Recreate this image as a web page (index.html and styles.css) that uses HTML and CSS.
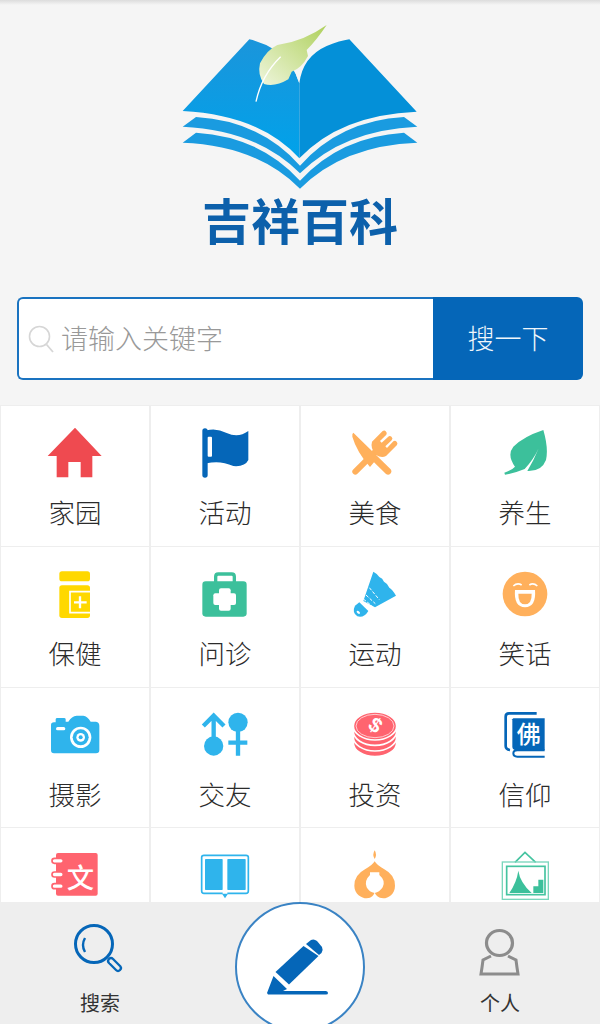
FILE: index.html
```html
<!DOCTYPE html>
<html lang="zh-CN">
<head>
<meta charset="utf-8">
<title>吉祥百科</title>
<link rel="stylesheet" href="styles.css">
</head>
<body>
<header class="brand">
  <svg class="logo" viewBox="0 60 840 510" aria-hidden="true">
    <defs>
      <linearGradient id="feather" x1="1" y1="0" x2="0" y2="1">
        <stop offset="0" stop-color="#aed05c"/>
        <stop offset="0.5" stop-color="#cfe39c"/>
        <stop offset="1" stop-color="#eef5dc"/>
      </linearGradient>
      <linearGradient id="pageL" x1="0" y1="0" x2="0" y2="1">
        <stop offset="0" stop-color="#1b95db"/>
        <stop offset="1" stop-color="#00a2ea"/>
      </linearGradient>
    </defs>
    <path fill="url(#pageL)" d="M68 333 L268 118 Q310 128 345 150 Q400 190 418 250 V475 Q300 345 68 333Z"/>
    <path fill="#0490d8" d="M418 250 Q428 170 500 138 Q540 122 568 118 L770 335 Q540 345 418 475Z"/>
    <path fill="#1a9be0" d="M68 380 L108 351 Q300 362 420 497 V520 Q290 390 68 380Z"/>
    <path fill="#1a9be0" d="M772 380 L732 351 Q540 362 420 497 V520 Q550 390 772 380Z"/>
    <path fill="#1a9be0" d="M68 428 L108 398 Q300 410 420 542 V566 Q290 436 68 428Z"/>
    <path fill="#1a9be0" d="M772 428 L732 398 Q540 410 420 542 V566 Q550 436 772 428Z"/>
    <path fill="url(#feather)" d="M500 75 Q470 120 440 150 L444 168 Q425 205 395 215 L385 238 Q345 262 312 252 Q292 225 300 190 Q320 150 352 135 Q430 125 500 75Z"/>
    <path fill="#f5f5f5" d="M405 215 Q415 222 418 250 Q412 235 405 215Z"/>
    <path fill="none" stroke="#ffffff" stroke-width="4" d="M288 305 Q305 225 362 170"/>
  </svg>
  <div class="brand-name">吉祥百科</div>
</header>

<div class="search">
  <div class="search-field">
    <svg class="search-glass" viewBox="0 0 26 28" aria-hidden="true">
      <circle cx="11.5" cy="11.5" r="10" fill="none" stroke="#d6d6d6" stroke-width="1.6"/>
      <path d="M18.5 19.5 L25 27" stroke="#d6d6d6" stroke-width="1.8" fill="none"/>
    </svg>
    <span class="placeholder">请输入关键字</span>
  </div>
  <div class="search-btn">搜一下</div>
</div>

<main class="content">
  <div class="grid">
    <a class="cell">
      <svg class="icon" viewBox="135 63 180 162"><path fill="#ef4a50" d="M225 68 L305 153 H277 V217 H242 V171 H205 V217 H170 V153 H143Z"/></svg>
      <span class="label">家园</span>
    </a>
    <a class="cell">
      <svg class="icon" viewBox="585 63 180 162">
        <path fill="#0566b8" d="M620 76 Q650 68 680 84 Q715 100 745 78 V165 Q735 186 700 183 Q660 165 620 175Z"/>
        <rect x="607" y="70" width="16" height="148" rx="8" fill="#0566b8"/>
        <rect x="623" y="95" width="13" height="60" rx="3" fill="#fff"/>
      </svg>
      <span class="label">活动</span>
    </a>
    <a class="cell">
      <svg class="icon" viewBox="135 63 180 162">
        <path fill="#ffb05c" d="M160 83 L272 193 A10 10 0 0 1 258 207 L222 172 L210 186 Q170 140 157 95 Q156 85 160 83Z"/>
        <path fill="none" stroke="#ffb05c" stroke-width="18" stroke-linecap="round" d="M166 200 L236 130"/>
        <path fill="#ffb05c" d="M216 110 L248 78 A8 8 0 0 1 259 89 L240 108 L245 113 L264 96 A7 7 0 0 1 275 106 L256 124 L261 129 L280 109 A8 8 0 0 1 291 120 L258 153 Q245 160 228 150 Q210 130 216 110Z"/>
      </svg>
      <span class="label">美食</span>
    </a>
    <a class="cell">
      <svg class="icon" viewBox="585 63 180 162"><path fill="#3cc09b" d="M730 75 Q746 130 738 165 Q725 200 682 198 Q702 165 716 130 Q700 165 674 192 Q640 206 615 209 L613 203 Q635 196 645 185 Q620 150 640 125 Q670 95 730 75Z"/></svg>
      <span class="label">养生</span>
    </a>

    <a class="cell">
      <svg class="icon" viewBox="135 486 180 162">
        <rect x="178" y="499" width="92" height="30" rx="8" fill="#ffd800"/>
        <rect x="178" y="541" width="92" height="98" rx="8" fill="#ffd800"/>
        <path fill="none" stroke="#fff" stroke-width="5" d="M270 560 H210 V623 H270"/>
        <path fill="none" stroke="#fff" stroke-width="7" d="M240 574 V610 M222 592 H260"/>
      </svg>
      <span class="label">保健</span>
    </a>
    <a class="cell">
      <svg class="icon" viewBox="585 486 180 162">
        <rect x="607" y="529" width="133" height="106" rx="10" fill="#3cc09b"/>
        <path fill="none" stroke="#3cc09b" stroke-width="10" d="M647 535 V515 Q647 507 655 507 H695 Q703 507 703 515 V535"/>
        <rect x="657" y="550" width="35" height="67" rx="6" fill="#fff"/>
        <rect x="640" y="565" width="68" height="35" rx="6" fill="#fff"/>
      </svg>
      <span class="label">问诊</span>
    </a>
    <a class="cell">
      <svg class="icon" viewBox="135 486 180 162">
        <path fill="#2fb4ec" d="M220 500 Q232 506 238 516 Q248 520 252 530 Q264 536 268 548 Q278 554 288 572 L225 607 L190 588Z"/>
        <path fill="#2fb4ec" d="M178 592 L205 618 Q192 640 172 634 Q155 622 165 602Z"/>
        <path fill="none" stroke="#fff" stroke-width="3" stroke-dasharray="10 5" d="M190 582 L215 602 M198 570 L226 596 M208 548 L238 584"/>
        <ellipse cx="175" cy="622" rx="6" ry="3.5" fill="#fff" transform="rotate(40 175 622)"/>
      </svg>
      <span class="label">运动</span>
    </a>
    <a class="cell">
      <svg class="icon" viewBox="585 486 180 162">
        <circle cx="675" cy="567" r="67" fill="#ffb05c"/>
        <path fill="none" stroke="#fff" stroke-width="5" d="M640 543 Q652 532 665 540 M688 540 Q700 532 712 543"/>
        <path fill="#fff" d="M645 555 H705 Q709 606 675 607 Q641 606 645 555Z"/>
        <path fill="#ffb05c" d="M655 566 H695 Q696 597 675 598 Q654 597 655 566Z"/>
      </svg>
      <span class="label">笑话</span>
    </a>

    <a class="cell">
      <svg class="icon" viewBox="135 54 180 162">
        <path fill="#2fb4ec" d="M153 105 Q153 97 162 97 H167 V88 Q167 84 172 84 H192 Q197 84 197 88 V95 H205 Q215 78 230 77 H250 Q262 78 272 95 H288 Q298 97 298 107 V180 Q298 190 288 190 H162 Q153 190 153 180Z"/>
        <rect x="168" y="111" width="28" height="10" rx="5" fill="#fff"/>
        <circle cx="242" cy="142" r="32" fill="#fff"/>
        <circle cx="242" cy="142" r="24" fill="#2fb4ec"/>
        <circle cx="242" cy="142" r="13" fill="#fff"/>
        <circle cx="242" cy="142" r="6" fill="#2fb4ec"/>
      </svg>
      <span class="label">摄影</span>
    </a>
    <a class="cell">
      <svg class="icon" viewBox="585 54 180 162">
        <circle cx="641" cy="168" r="29" fill="#2fb4ec"/>
        <path fill="none" stroke="#2fb4ec" stroke-width="13" d="M641 150 V80 M610 108 L641 77 L672 108"/>
        <circle cx="714" cy="97" r="29" fill="#2fb4ec"/>
        <path fill="none" stroke="#2fb4ec" stroke-width="13" d="M714 115 V197 M685 158 H742"/>
      </svg>
      <span class="label">交友</span>
    </a>
    <a class="cell">
      <svg class="icon" viewBox="135 54 180 162">
        <g fill="#ff646f" stroke="#fff" stroke-width="5">
          <ellipse cx="225" cy="158" rx="65" ry="42"/>
          <ellipse cx="225" cy="141" rx="65" ry="42"/>
          <ellipse cx="225" cy="124" rx="65" ry="42"/>
          <ellipse cx="225" cy="108" rx="65" ry="42"/>
        </g>
        <ellipse cx="225" cy="108" rx="57" ry="35" fill="none" stroke="#fff" stroke-width="2"/>
        <text class="coin-text" x="225" y="126" transform="rotate(35 225 108)">$</text>
      </svg>
      <span class="label">投资</span>
    </a>
    <a class="cell">
      <svg class="icon" viewBox="585 54 180 162">
        <path fill="none" stroke="#0566b8" stroke-width="8" d="M710 70 H627 Q617 70 617 80 V168 Q617 178 630 180"/>
        <path fill="#0566b8" d="M640 85 H734 V180 H650 Q637 180 637 170 V88Z"/>
        <path fill="none" stroke="#0566b8" stroke-width="6" d="M734 200 H652 Q640 200 640 190 Q640 181 652 181 H734"/>
        <text class="book-text" x="686" y="160">佛</text>
      </svg>
      <span class="label">信仰</span>
    </a>

    <a class="cell">
      <svg class="icon" viewBox="135 477 180 162">
        <rect x="168" y="492" width="125" height="128" rx="6" fill="#ff646f"/>
        <g fill="#fff" stroke="#ff646f" stroke-width="5">
          <rect x="156" y="508" width="34" height="15" rx="7.5"/>
          <rect x="156" y="549" width="34" height="15" rx="7.5"/>
          <rect x="156" y="584" width="34" height="15" rx="7.5"/>
        </g>
        <text class="note-text" x="241" y="598">文</text>
      </svg>
    </a>
    <a class="cell">
      <svg class="icon" viewBox="585 477 180 162">
        <path fill="none" stroke="#2fb4ec" stroke-width="5" d="M668 613 H612 Q605 613 605 606 V505 Q605 499 612 499 H738 Q745 499 745 505 V606 Q745 613 738 613 H682"/>
        <path fill="#2fb4ec" d="M666 614 H684 L675 628Z"/>
        <rect x="615" y="510" width="53" height="93" rx="2" fill="#2fb4ec"/>
        <rect x="682" y="510" width="55" height="93" rx="2" fill="#2fb4ec"/>
      </svg>
    </a>
    <a class="cell">
      <svg class="icon" viewBox="135 477 180 162">
        <path fill="#ffb05c" d="M224 484 Q232 497 224 510 Q216 497 224 484Z"/>
        <path fill="#ffb05c" d="M224 517 Q216 530 195 541 Q163 558 163 590 C163 615 185 628 200 628 C215 628 222 618 224 610 C226 618 235 628 250 628 C265 628 285 615 285 590 Q285 558 253 541 Q232 530 224 517Z"/>
        <path fill="#fff" d="M210 550 H238 V558 Q258 575 248 595 Q238 610 224 612 Q208 610 200 595 Q192 575 210 558Z"/>
      </svg>
    </a>
    <a class="cell">
      <svg class="icon" viewBox="585 477 180 162">
        <path fill="none" stroke="#45c4a0" stroke-width="5" d="M645 520 L675 490 L707 520"/>
        <rect x="607" y="519" width="138" height="112" fill="none" stroke="#7ad6bc" stroke-width="4"/>
        <rect x="620" y="532" width="115" height="85" fill="none" stroke="#45c4a0" stroke-width="5"/>
        <path fill="#3cc09b" d="M628 612 Q650 580 655 545 Q660 580 695 612Z"/>
        <path fill="#3cc09b" d="M700 612 V592 H715 V572 H730 V612Z"/>
      </svg>
    </a>
  </div>
</main>

<nav class="tabbar">
  <a class="tab">
    <svg class="tab-icon" viewBox="0 0 60 60" aria-hidden="true">
      <circle cx="24" cy="22" r="18.5" fill="none" stroke="#0566b8" stroke-width="3"/>
      <path fill="none" stroke="#0566b8" stroke-width="2.4" d="M15 30 Q11 23 15 16"/>
      <path fill="none" stroke="#0566b8" stroke-width="8" stroke-linecap="round" d="M41 39 L48 46"/>
      <path fill="none" stroke="#eeeeee" stroke-width="3.4" stroke-linecap="round" d="M41 39 L48 46"/>
    </svg>
    <span class="tab-label">搜索</span>
  </a>
  <div class="tab"></div>
  <a class="tab">
    <svg class="tab-icon" viewBox="0 0 60 60" aria-hidden="true">
      <ellipse cx="29.5" cy="21" rx="13" ry="12.5" fill="none" stroke="#8c8c8c" stroke-width="3.2"/>
      <path fill="none" stroke="#8c8c8c" stroke-width="3" d="M21 34 L13 38 Q12 46 11 52 H48 Q47 46 46 38 L38 34"/>
    </svg>
    <span class="tab-label">个人</span>
  </a>
  <button class="compose" type="button" aria-label="compose">
    <svg class="compose-icon" viewBox="265 935 65 60" aria-hidden="true">
      <path fill="#0566b8" d="M267 993 L273.5 976 L287 989 L283 991 H326 Q328 991.5 328 993 Q328 994.5 326 994.5 H268Z"/>
      <path fill="#0566b8" d="M275.5 972 L303.5 946 L318.5 956 L289 984.5Z"/>
      <path fill="#0566b8" d="M306 944 L311 940 Q314 938.5 317 941 L322 947 Q323.5 950 321.5 953 L319 955Z"/>
    </svg>
  </button>
</nav>
</body>
</html>
```

FILE: styles.css
```css
* { box-sizing: border-box; }

html, body {
  margin: 0;
  height: 100%;
}

body {
  display: flex;
  flex-direction: column;
  height: 1024px;
  overflow: hidden;
  background: #f5f5f5;
  font-family: "Noto Sans CJK SC", "Noto Sans", sans-serif;
  color: #333;
}

.brand {
  display: flex;
  flex-direction: column;
  align-items: center;
  height: 297px;
  padding-top: 20px;
  background: linear-gradient(#dcdcdc, #f5f5f5) no-repeat top / 100% 5px;
}

.logo {
  display: block;
  width: 280px;
  height: 170px;
}

.brand-name {
  margin-top: 4px;
  font-size: 49px;
  line-height: 50px;
  font-weight: 700;
  color: #0c60ab;
}

.search {
  display: flex;
  height: 83px;
  margin: 0 17px 25px;
  flex: none;
}

.search-field {
  flex: 1;
  display: flex;
  align-items: center;
  gap: 7px;
  padding-left: 9px;
  background: #fff;
  border: 2px solid #1a73c0;
  border-right: 0;
  border-radius: 6px 0 0 6px;
}

.search-glass {
  width: 26px;
  height: 28px;
  flex: none;
}

.placeholder {
  font-size: 27px;
  line-height: 36px;
  margin-top: -2px;
  color: #999;
  font-weight: 300;
}

.search-btn {
  flex: none;
  width: 150px;
  padding-bottom: 2px;
  display: flex;
  align-items: center;
  justify-content: center;
  background: #0566b8;
  color: #f0f6fb;
  font-size: 27px;
  font-weight: 300;
  border-radius: 0 6px 6px 0;
}

.content {
  flex: 1;
  min-height: 0;
  overflow: hidden;
}

.grid {
  display: grid;
  grid-template-columns: repeat(4, 1fr);
  grid-auto-rows: 140.75px;
  border-top: 1px solid #eee;
}

.cell {
  display: flex;
  flex-direction: column;
  align-items: center;
  padding-top: 20px;
  background: #fff;
  border: 1px solid #eee;
  border-top: 0;
}

.icon {
  display: block;
  width: 60px;
  height: 54px;
  flex: none;
}

.label {
  margin-top: 15px;
  font-size: 26.5px;
  line-height: 34px;
  font-weight: 300;
  color: #2b2b2b;
}

.coin-text {
  fill: #fff;
  font-family: "Liberation Sans", sans-serif;
  font-size: 62px;
  font-weight: 700;
  text-anchor: middle;
}

.book-text {
  fill: #fff;
  font-size: 72px;
  font-weight: 500;
  text-anchor: middle;
}

.note-text {
  fill: #fff;
  font-size: 82px;
  font-weight: 500;
  text-anchor: middle;
}

.tabbar {
  position: relative;
  flex: none;
  display: grid;
  grid-template-columns: repeat(3, 1fr);
  height: 122px;
  background: #eee;
}

.tab {
  display: flex;
  flex-direction: column;
  align-items: center;
  padding-top: 20px;
}

.tab-icon {
  display: block;
  width: 60px;
  height: 60px;
  flex: none;
}

.tab-label {
  margin-top: 6px;
  font-size: 20px;
  line-height: 30px;
  font-weight: 400;
  color: #333;
}

.compose {
  position: absolute;
  left: 235px;
  top: 0;
  width: 130px;
  height: 130px;
  padding: 0;
  background: #fff;
  border: 2px solid #3a83c4;
  border-radius: 50%;
}

.compose-icon {
  position: absolute;
  left: 28px;
  top: 31px;
  width: 65px;
  height: 60px;
}
```
